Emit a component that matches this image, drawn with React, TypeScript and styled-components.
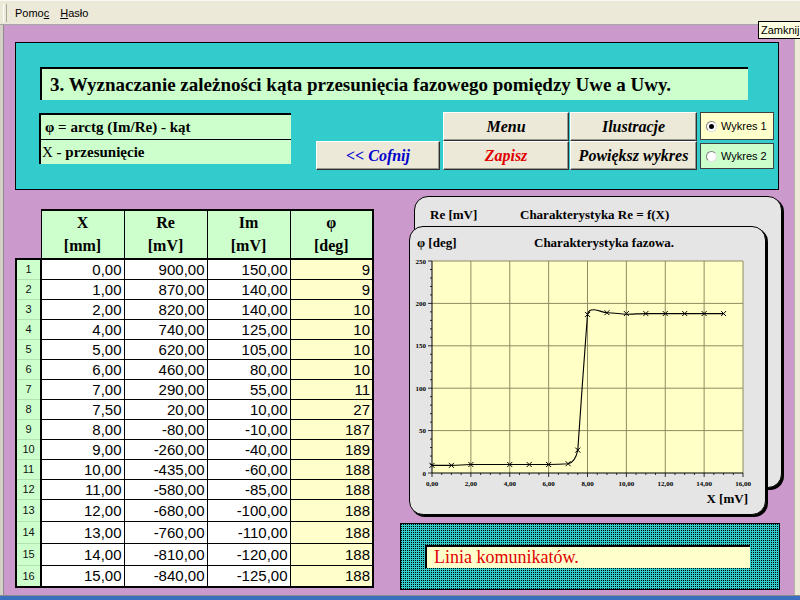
import React from 'react';
import styled, { createGlobalStyle } from 'styled-components';

const GlobalStyle = createGlobalStyle`
  html, body {
    margin: 0;
    padding: 0;
    width: 800px;
    height: 600px;
    overflow: hidden;
    background: #ece9d8;
    font-family: "Liberation Serif", "Times New Roman", serif;
  }
`;

type Row = [string, string, string, string];

const rows: Row[] = [
  ['0,00', '900,00', '150,00', '9'],
  ['1,00', '870,00', '140,00', '9'],
  ['2,00', '820,00', '140,00', '10'],
  ['4,00', '740,00', '125,00', '10'],
  ['5,00', '620,00', '105,00', '10'],
  ['6,00', '460,00', '80,00', '10'],
  ['7,00', '290,00', '55,00', '11'],
  ['7,50', '20,00', '10,00', '27'],
  ['8,00', '-80,00', '-10,00', '187'],
  ['9,00', '-260,00', '-40,00', '189'],
  ['10,00', '-435,00', '-60,00', '188'],
  ['11,00', '-580,00', '-85,00', '188'],
  ['12,00', '-680,00', '-100,00', '188'],
  ['13,00', '-760,00', '-110,00', '188'],
  ['14,00', '-810,00', '-120,00', '188'],
  ['15,00', '-840,00', '-125,00', '188'],
];

const Page = styled.div`
  position: relative;
  width: 800px;
  height: 600px;
  display: flex;
  flex-direction: column;
  background: #ece9d8;
  overflow: hidden;
`;

const MenuBar = styled.div`
  flex: none;
  height: 25px;
  box-sizing: border-box;
  display: flex;
  align-items: center;
  border-top: 1px solid #f8f7f2;
  border-bottom: 1px solid #a7a6aa;
  font: 11px "Liberation Sans", Arial, sans-serif;
  color: #000;
`;

const Grip = styled.div`
  width: 2px;
  height: 18px;
  margin: 0 8px 0 3px;
  border-left: 1px solid #fff;
  border-right: 1px solid #aca899;
`;

const MenuItem = styled.span`
  margin-right: 11px;
`;

const Workspace = styled.div`
  flex: 1;
  display: flex;
  min-height: 0;
`;

const LeftEdge = styled.div`
  flex: none;
  width: 4px;
  background: #d4d0c8;
  box-sizing: border-box;
  border-right: 1px solid #8c8c8c;
`;

const RightEdge = styled.div`
  flex: none;
  width: 5px;
  background: #ece9d8;
  border-left: 1px solid #b8b4aa;
`;

const Desk = styled.main`
  flex: 1;
  background: #cc99cc;
  padding: 17px 0 0 11px;
  box-sizing: border-box;
`;

const BottomBar = styled.div`
  flex: none;
  height: 4px;
  border-top: 1px solid #8c8c8c;
  background: #3b6fc0;
`;

const Tooltip = styled.div`
  position: absolute;
  left: 758px;
  top: 21px;
  height: 18px;
  padding: 0 2px;
  box-sizing: border-box;
  border: 1px solid #000;
  background: #ffffe1;
  font: 11px "Liberation Sans", Arial, sans-serif;
  line-height: 16px;
`;

/* ---- top control panel ---- */

const ControlPanel = styled.section`
  width: 764px;
  height: 148px;
  box-sizing: border-box;
  background: #33cccc;
  border: 1px solid #000;
  padding: 24px 0 0 24px;
`;

const TitleBar = styled.h1`
  margin: 0;
  width: 708px;
  height: 33px;
  box-sizing: border-box;
  display: flex;
  align-items: center;
  padding-left: 8px;
  background: #ccffcc;
  border-top: 2px solid #000;
  border-left: 2px solid #000;
  font: bold 19px "Liberation Serif", serif;
  color: #000;
  white-space: nowrap;
`;

const ControlsRow = styled.div`
  display: flex;
  align-items: flex-start;
  margin-top: 12px;
`;

const InfoBox = styled.div`
  width: 250px;
  margin: 1px 0 0 -1px;
  background: #ccffcc;
  border-top: 2px solid #000;
  border-left: 2px solid #000;
`;

const InfoRow = styled.div<{ $indent: number; $line?: boolean }>`
  height: ${(p) => (p.$line ? 25 : 24)}px;
  box-sizing: border-box;
  display: flex;
  align-items: center;
  padding-left: ${(p) => p.$indent}px;
  border-bottom: ${(p) => (p.$line ? '1px solid #000' : 'none')};
  font: bold 15px "Liberation Serif", serif;
  white-space: pre;
`;

const Plain = styled.span`
  font-weight: normal;
`;

const NavButton = styled.button<{ $color: string; $w: number }>`
  width: ${(p) => p.$w}px;
  height: 29px;
  padding: 0;
  box-sizing: border-box;
  background: #ece9d8;
  border: 1px solid;
  border-color: #fff #303030 #303030 #fff;
  box-shadow: inset -1px -1px 0 #9c9a90;
  color: ${(p) => p.$color};
  font: italic bold 16px "Liberation Serif", serif;
  cursor: default;
`;

const BackButton = styled(NavButton)`
  margin: 29px 0 0 25px;
`;

const ButtonGrid = styled.div`
  display: grid;
  grid-template-columns: 126px 127px;
  column-gap: 1px;
  margin-left: 3px;
`;

const RadioStack = styled.div`
  display: flex;
  flex-direction: column;
  gap: 3px;
  margin-left: 3px;
  width: 74px;
`;

const RadioBox = styled.label<{ $bg: string; $h: number }>`
  height: ${(p) => p.$h}px;
  box-sizing: border-box;
  display: flex;
  align-items: center;
  gap: 4px;
  padding-left: 5px;
  background: ${(p) => p.$bg};
  border: 1px solid #404040;
  font: 11px "Liberation Sans", Arial, sans-serif;
  color: #000;
`;

const RadioDot = styled.span<{ $checked?: boolean }>`
  position: relative;
  width: 11px;
  height: 11px;
  box-sizing: border-box;
  border-radius: 50%;
  background: #fff;
  border: 1px solid;
  border-color: #808080 #e0e0e0 #e0e0e0 #808080;

  &::after {
    content: '';
    display: ${(p) => (p.$checked ? 'block' : 'none')};
    position: absolute;
    left: 2px;
    top: 2px;
    width: 5px;
    height: 5px;
    border-radius: 50%;
    background: #000;
  }
`;

/* ---- lower area ---- */

const LowerRow = styled.div`
  display: flex;
  align-items: flex-start;
`;

const DataTable = styled.table`
  margin-top: 19px;
  width: 357px;
  border-collapse: collapse;
  table-layout: fixed;
`;

const CornerCell = styled.th`
  padding: 0;
  border: none;
  background: transparent;
`;

const HeadCell = styled.th<{ $top?: boolean; $last?: boolean }>`
  height: ${(p) => (p.$top ? 23 : 24)}px;
  padding: 0;
  background: #ccffcc;
  border-left: 1px solid #000;
  border-right: ${(p) => (p.$last ? '2px' : '1px')} solid #000;
  border-top: ${(p) => (p.$top ? '2px solid #000' : 'none')};
  border-bottom: ${(p) => (p.$top ? 'none' : '2px solid #000')};
  font: bold 16px "Liberation Serif", serif;
  text-align: center;
`;

const NumCell = styled.td<{ $first?: boolean; $lastRow?: boolean }>`
  padding: 0;
  background: #ccffcc;
  border-left: 2px solid #000;
  border-right: 2px solid #000;
  border-top: ${(p) => (p.$first ? '2px solid #000' : '1px solid #b2e2b2')};
  border-bottom: ${(p) => (p.$lastRow ? '2px solid #000' : '1px solid #b2e2b2')};
  font: 11px "Liberation Sans", Arial, sans-serif;
  text-align: center;
  color: #111;
`;

const ValCell = styled.td<{ $phi?: boolean; $lastRow?: boolean }>`
  padding: 0 2px 0 0;
  background: ${(p) => (p.$phi ? '#ffffcc' : '#fff')};
  border: 1px solid #000;
  border-right-width: ${(p) => (p.$phi ? 2 : 1)}px;
  border-bottom-width: ${(p) => (p.$lastRow ? 2 : 1)}px;
  font: 15px "Liberation Sans", Arial, sans-serif;
  text-align: right;
  color: #000;
  white-space: nowrap;
`;

const RightColumn = styled.div`
  margin: 6px 0 0 26px;
  width: 382px;
`;

const ChartStack = styled.div`
  display: grid;

  & > * {
    grid-area: 1 / 1;
  }
`;

const Card = styled.div<{ $w: number; $h: number; $ml: number; $mt: number }>`
  width: ${(p) => p.$w}px;
  height: ${(p) => p.$h}px;
  margin: ${(p) => p.$mt}px 0 0 ${(p) => p.$ml}px;
  box-sizing: border-box;
  background: #e5e5e5;
  border: 1px solid #000;
  border-radius: 14px;
  box-shadow: 2px 2px 0 #000;
`;

const CardHeader = styled.div<{ $pt: number; $pl: number; $gap: number }>`
  display: flex;
  gap: ${(p) => p.$gap}px;
  padding: ${(p) => p.$pt}px 0 0 ${(p) => p.$pl}px;
  font: bold 13px "Liberation Serif", serif;
  line-height: 14px;
  white-space: nowrap;
`;

const ChartSvg = styled.svg`
  display: block;
  margin: 2px 0 0 2px;
`;

const MessagePanel = styled.div`
  margin-top: 8px;
  width: 380px;
  height: 67px;
  box-sizing: border-box;
  border: 1px solid #000;
  background-color: #000;
  background-image: linear-gradient(to right, transparent 1px, #33cccc 1px),
    linear-gradient(to bottom, transparent 1px, #33cccc 1px);
  background-size: 2px 2px;
  padding: 21px 0 0 24px;
`;

const MessageBox = styled.div`
  width: 325px;
  height: 23px;
  box-sizing: border-box;
  background: #ffffcc;
  border-top: 2px solid #000;
  border-left: 2px solid #000;
  padding-left: 7px;
  font: 18px "Liberation Serif", serif;
  line-height: 20px;
  color: #e00000;
`;

/* ---- chart ---- */

const PL = 20;
const PT = 9;
const PW = 311;
const PH = 212;
const sx = (x: number) => PL + (x / 16) * PW;
const sy = (v: number) => PT + PH - (v / 250) * PH;

// smoothed line as in the spreadsheet chart, in data units
const curve: [string, number[]][] = [
  ['M', [0, 9]],
  ['L', [1, 9]],
  ['C', [1.4, 9, 1.6, 10, 2, 10]],
  ['L', [6, 10]],
  ['C', [6.4, 10, 6.7, 10.4, 7, 11]],
  ['C', [7.2, 11.8, 7.4, 16, 7.5, 27]],
  ['C', [7.6, 60, 7.9, 160, 8, 187]],
  ['C', [8.06, 192, 8.15, 192.6, 8.35, 192.4]],
  ['C', [8.6, 192, 8.8, 189, 9, 189]],
  ['C', [9.4, 189, 9.7, 187.3, 10, 187.3]],
  ['C', [10.3, 187.3, 10.7, 188, 11, 188]],
  ['L', [15, 188]],
];

const curvePath = curve
  .map(([cmd, nums]) => {
    const pts: string[] = [];
    for (let i = 0; i < nums.length; i += 2) pts.push(`${sx(nums[i]).toFixed(1)},${sy(nums[i + 1]).toFixed(1)}`);
    return cmd + pts.join(' ');
  })
  .join(' ');

const toNum = (s: string) => parseFloat(s.replace(',', '.'));

const PhaseChart = () => {
  const grid = '#8d8c62';
  const minorY = Array.from({ length: 26 }, (_, i) => i * 10);
  const minorX = Array.from({ length: 33 }, (_, i) => i * 0.5);
  return (
    <ChartSvg width={350} height={258} viewBox="0 0 350 258">
      <rect x={PL} y={PT} width={PW} height={PH} fill="#ffffc6" />
      {[1, 2, 3, 4, 5, 6, 7, 8].map((k) => (
        <line key={'v' + k} x1={sx(k * 2)} x2={sx(k * 2)} y1={PT} y2={PT + PH} stroke={grid} strokeWidth={1} />
      ))}
      {[1, 2, 3, 4, 5].map((k) => (
        <line key={'h' + k} x1={PL} x2={PL + PW} y1={sy(k * 50)} y2={sy(k * 50)} stroke={grid} strokeWidth={1} />
      ))}
      <line x1={PL} x2={PL} y1={PT} y2={PT + PH} stroke="#000" />
      <line x1={PL} x2={PL + PW} y1={PT + PH} y2={PT + PH} stroke="#000" />
      {minorY.map((v) => (
        <line key={'ty' + v} x1={PL - (v % 50 === 0 ? 4 : 2)} x2={PL} y1={sy(v)} y2={sy(v)} stroke="#000" strokeWidth={0.8} />
      ))}
      {minorX.map((x) => (
        <line key={'tx' + x} x1={sx(x)} x2={sx(x)} y1={PT + PH} y2={PT + PH + (x % 2 === 0 ? 4 : 2)} stroke="#000" strokeWidth={0.8} />
      ))}
      <g fontFamily='"Liberation Serif", serif' fontWeight="bold" fontSize="7" fill="#000">
        {[0, 50, 100, 150, 200, 250].map((v) => (
          <text key={'ly' + v} x={PL - 6} y={sy(v) + 2.5} textAnchor="end">
            {v}
          </text>
        ))}
        {[0, 2, 4, 6, 8, 10, 12, 14, 16].map((x) => (
          <text key={'lx' + x} x={sx(x)} y={PT + PH + 13} textAnchor="middle">
            {x},00
          </text>
        ))}
      </g>
      <text x={336} y={251} textAnchor="end" fontFamily='"Liberation Serif", serif' fontWeight="bold" fontSize="13">
        X [mV]
      </text>
      <path d={curvePath} fill="none" stroke="#000" strokeWidth={1.1} />
      {rows.map((r, i) => {
        const cx = sx(toNum(r[0]));
        const cy = sy(toNum(r[3]));
        return (
          <path key={'m' + i} d={`M${cx - 2.5},${cy - 2.5} L${cx + 2.5},${cy + 2.5} M${cx - 2.5},${cy + 2.5} L${cx + 2.5},${cy - 2.5}`} stroke="#000" strokeWidth={1} />
        );
      })}
    </ChartSvg>
  );
};

const App = () => (
  <Page>
    <GlobalStyle />
    <MenuBar>
      <Grip />
      <MenuItem>
        Pomo<u>c</u>
      </MenuItem>
      <MenuItem>
        <u>H</u>asło
      </MenuItem>
    </MenuBar>
    <Workspace>
      <LeftEdge />
      <Desk>
        <ControlPanel>
          <TitleBar>3. Wyznaczanie zależności kąta przesunięcia fazowego pomiędzy Uwe a Uwy.</TitleBar>
          <ControlsRow>
            <InfoBox>
              <InfoRow $indent={4} $line>
                φ = arctg (Im/Re) - kąt
              </InfoRow>
              <InfoRow $indent={1}>
                <Plain>X</Plain> - przesunięcie
              </InfoRow>
            </InfoBox>
            <BackButton $color="#0000cc" $w={124}>
              &lt;&lt; Cofnij
            </BackButton>
            <ButtonGrid>
              <NavButton $color="#000" $w={126}>Menu</NavButton>
              <NavButton $color="#000" $w={127}>Ilustracje</NavButton>
              <NavButton $color="#e00000" $w={126}>Zapisz</NavButton>
              <NavButton $color="#000" $w={127}>Powiększ wykres</NavButton>
            </ButtonGrid>
            <RadioStack>
              <RadioBox $bg="#ffffcc" $h={28}>
                <RadioDot $checked />
                Wykres 1
              </RadioBox>
              <RadioBox $bg="#ccffcc" $h={26}>
                <RadioDot />
                Wykres 2
              </RadioBox>
            </RadioStack>
          </ControlsRow>
        </ControlPanel>
        <LowerRow>
          <DataTable>
            <colgroup>
              <col style={{ width: 25 }} />
              <col style={{ width: 83 }} />
              <col style={{ width: 83 }} />
              <col style={{ width: 83 }} />
              <col style={{ width: 83 }} />
            </colgroup>
            <thead>
              <tr>
                <CornerCell />
                <HeadCell $top>X</HeadCell>
                <HeadCell $top>Re</HeadCell>
                <HeadCell $top>Im</HeadCell>
                <HeadCell $top $last>φ</HeadCell>
              </tr>
              <tr>
                <CornerCell />
                <HeadCell>[mm]</HeadCell>
                <HeadCell>[mV]</HeadCell>
                <HeadCell>[mV]</HeadCell>
                <HeadCell $last>[deg]</HeadCell>
              </tr>
            </thead>
            <tbody>
              {rows.map((r, i) => {
                const last = i === rows.length - 1;
                return (
                  <tr key={i} style={{ height: i < 12 ? 20 : 22 }}>
                    <NumCell $first={i === 0} $lastRow={last}>
                      {i + 1}
                    </NumCell>
                    <ValCell $lastRow={last}>{r[0]}</ValCell>
                    <ValCell $lastRow={last}>{r[1]}</ValCell>
                    <ValCell $lastRow={last}>{r[2]}</ValCell>
                    <ValCell $phi $lastRow={last}>
                      {r[3]}
                    </ValCell>
                  </tr>
                );
              })}
            </tbody>
          </DataTable>
          <RightColumn>
            <ChartStack>
              <Card $w={368} $h={292} $ml={14} $mt={0}>
                <CardHeader $pt={11} $pl={15} $gap={40}>
                  <span style={{ width: 50 }}>Re [mV]</span>
                  <span>Charakterystyka Re = f(X)</span>
                </CardHeader>
              </Card>
              <Card $w={357} $h={289} $ml={9} $mt={30}>
                <CardHeader $pt={9} $pl={7} $gap={66}>
                  <span style={{ width: 51 }}>φ [deg]</span>
                  <span>Charakterystyka fazowa.</span>
                </CardHeader>
                <PhaseChart />
              </Card>
            </ChartStack>
            <MessagePanel>
              <MessageBox>Linia komunikatów.</MessageBox>
            </MessagePanel>
          </RightColumn>
        </LowerRow>
      </Desk>
      <RightEdge />
    </Workspace>
    <BottomBar />
    <Tooltip>Zamknij</Tooltip>
  </Page>
);

export default App;
